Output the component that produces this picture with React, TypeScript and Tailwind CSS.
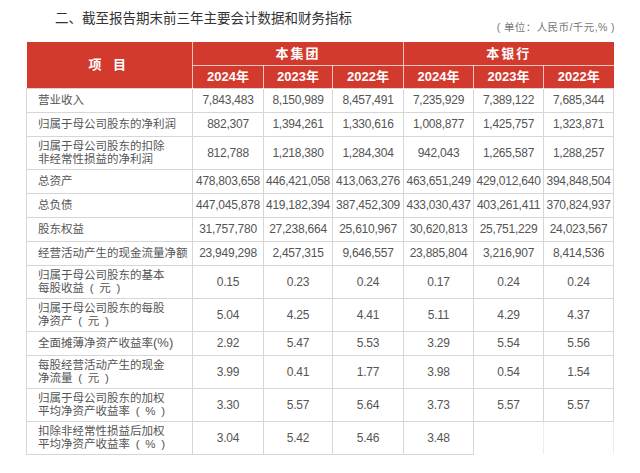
const font = '"Liberation Sans", "Noto Sans CJK SC", sans-serif';

type Row = { label: string[]; values: string[]; tall?: boolean };

const rows: Row[] = [
  { label: ["营业收入"], values: ["7,843,483", "8,150,989", "8,457,491", "7,235,929", "7,389,122", "7,685,344"] },
  { label: ["归属于母公司股东的净利润"], values: ["882,307", "1,394,261", "1,330,616", "1,008,877", "1,425,757", "1,323,871"] },
  { label: ["归属于母公司股东的扣除", "非经常性损益的净利润"], values: ["812,788", "1,218,380", "1,284,304", "942,043", "1,265,587", "1,288,257"], tall: true },
  { label: ["总资产"], values: ["478,803,658", "446,421,058", "413,063,276", "463,651,249", "429,012,640", "394,848,504"] },
  { label: ["总负债"], values: ["447,045,878", "419,182,394", "387,452,309", "433,030,437", "403,261,411", "370,824,937"] },
  { label: ["股东权益"], values: ["31,757,780", "27,238,664", "25,610,967", "30,620,813", "25,751,229", "24,023,567"] },
  { label: ["经营活动产生的现金流量净额"], values: ["23,949,298", "2,457,315", "9,646,557", "23,885,804", "3,216,907", "8,414,536"] },
  { label: ["归属于母公司股东的基本", "每股收益（元）"], values: ["0.15", "0.23", "0.24", "0.17", "0.24", "0.24"], tall: true },
  { label: ["归属于母公司股东的每股", "净资产（元）"], values: ["5.04", "4.25", "4.41", "5.11", "4.29", "4.37"], tall: true },
  { label: ["全面摊薄净资产收益率(%)"], values: ["2.92", "5.47", "5.53", "3.29", "5.54", "5.56"] },
  { label: ["每股经营活动产生的现金", "净流量（元）"], values: ["3.99", "0.41", "1.77", "3.98", "0.54", "1.54"], tall: true },
  { label: ["归属于母公司股东的加权", "平均净资产收益率（%）"], values: ["3.30", "5.57", "5.64", "3.73", "5.57", "5.57"], tall: true },
  { label: ["扣除非经常性损益后加权", "平均净资产收益率（%）"], values: ["3.04", "5.42", "5.46", "3.48", "", ""], tall: true },
];

const years = ["2024年", "2023年", "2022年", "2024年", "2023年", "2022年"];

// wide brackets as in the printed report: "（元）" -> padded text
function labelText(text: string) {
  const m = text.match(/^(.*)（(.+)）$/);
  if (!m) return text;
  return `${m[1]}\u2002(\u2002${m[2]}\u2002)`;
}

export default function App() {
  return (
    <div className="w-[640px] h-[473px] bg-white pl-[26px] overflow-hidden" style={{ fontFamily: font }}>
      <div className="flex items-start w-[589px] pt-[9px]">
        <div className="pl-[29px] text-[13.5px] leading-[20px] text-[#333]">
          二、截至报告期末前三年主要会计数据和财务指标
        </div>
        <div className="ml-auto mt-[11px] text-[10.5px] leading-[14px] tracking-[0.04em] text-[#777]">
          ( 单位：人民币/千元,% )
        </div>
      </div>

      <table className="mt-[8px] table-fixed border-collapse text-[#555]" style={{ width: 587 }}>
        <colgroup>
          <col className="w-[166px]" />
          <col className="w-[71px]" />
          <col className="w-[69px]" />
          <col className="w-[71px]" />
          <col className="w-[70px]" />
          <col className="w-[70px]" />
          <col className="w-[70px]" />
        </colgroup>
        <thead>
          <tr className="h-[23px] bg-[#d33a2e] text-white text-[13px]">
            <th rowSpan={2} className="border-r border-white/70 tracking-[0.3em] font-bold">项 目</th>
            <th colSpan={3} className="border-r border-b border-white/70 tracking-[0.15em] font-bold">本集团</th>
            <th colSpan={3} className="border-b border-white/70 tracking-[0.15em] font-bold">本银行</th>
          </tr>
          <tr className="h-[23px] bg-[#d33a2e] text-white text-[13px]">
            {years.map((y, i) => (
              <th key={i} className={`font-bold ${i < 5 ? "border-r border-white/70" : ""}`}>
                {y}
              </th>
            ))}
          </tr>
        </thead>
        <tbody>
          {rows.map((r, ri) => (
            <tr key={ri} className={r.tall ? "h-[33px]" : "h-[24px]"}>
              <td className="border border-[#d6d6d6] pl-[11px] text-[11.5px] leading-[13px] text-[#555]">
                {r.label.map((l, li) => (
                  <div key={li}>
                    {l.endsWith("(%)") ? (
                      <>
                        {l.slice(0, -3)}
                        <span className="text-[13px]">(%)</span>
                      </>
                    ) : (
                      labelText(l)
                    )}
                  </div>
                ))}
              </td>
              {r.values.map((v, vi) => (
                <td
                  key={vi}
                  className={`text-center text-[12px] px-0 whitespace-nowrap tracking-[-0.02em] ${
                    v === "" ? "border-l border-r border-[#eeeeee]" : "border border-[#d6d6d6]"
                  }`}
                >
                  {v}
                </td>
              ))}
            </tr>
          ))}
        </tbody>
      </table>
    </div>
  );
}
